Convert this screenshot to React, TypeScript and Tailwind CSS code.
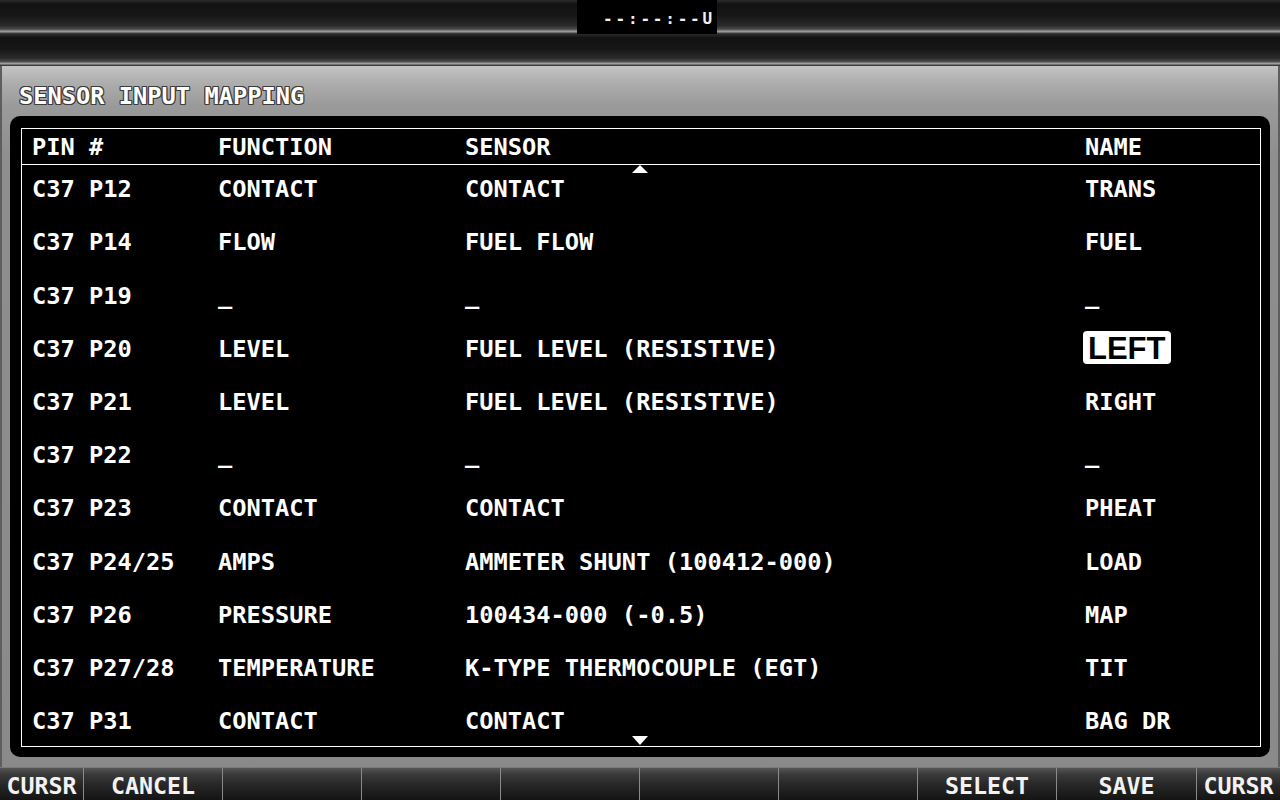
import React from "react";

const rows: [string, string, string, string][] = [
  ["C37 P12", "CONTACT", "CONTACT", "TRANS"],
  ["C37 P14", "FLOW", "FUEL FLOW", "FUEL"],
  ["C37 P19", "_", "_", "_"],
  ["C37 P20", "LEVEL", "FUEL LEVEL (RESISTIVE)", "LEFT"],
  ["C37 P21", "LEVEL", "FUEL LEVEL (RESISTIVE)", "RIGHT"],
  ["C37 P22", "_", "_", "_"],
  ["C37 P23", "CONTACT", "CONTACT", "PHEAT"],
  ["C37 P24/25", "AMPS", "AMMETER SHUNT (100412-000)", "LOAD"],
  ["C37 P26", "PRESSURE", "100434-000 (-0.5)", "MAP"],
  ["C37 P27/28", "TEMPERATURE", "K-TYPE THERMOCOUPLE (EGT)", "TIT"],
  ["C37 P31", "CONTACT", "CONTACT", "BAG DR"],
];

const keys: [string, string][] = [
  ["CURSR", "w-[83px]"],
  ["CANCEL", "w-[139px]"],
  ["", "w-[139px]"],
  ["", "w-[139px]"],
  ["", "w-[139px]"],
  ["", "w-[139px]"],
  ["", "w-[139px]"],
  ["SELECT", "w-[139px]"],
  ["SAVE", "w-[140px]"],
  ["CURSR", "w-[84px]"],
];

const barBg =
  "bg-[linear-gradient(to_bottom,#2c2c2c_0%,#121212_12%,#161616_45%,#2a2a2a_75%,#4a4a4a_86%,#a0a0a0_92%,#5a5a5a_97%,#1a1a1a_100%)]";

export default function App() {
  return (
    <div className="w-[1280px] h-[800px] bg-black flex flex-col overflow-hidden font-['DejaVu_Sans_Mono',monospace] font-bold text-white">
      {/* Top bar */}
      <div className="h-[34px] flex shrink-0">
        <div className={`w-[577px] ${barBg}`} />
        <div className="w-[140px] bg-black flex items-center justify-end pr-[2px] pt-[3px] text-[16px] tracking-[2.8px] leading-none text-[#f0f0f0]">
          --:--:--U
        </div>
        <div className={`flex-1 ${barBg}`} />
      </div>
      {/* Second bar */}
      <div className={`h-[32px] shrink-0 ${barBg}`} />

      {/* Gray panel */}
      <div className="h-[701px] shrink-0 flex flex-col border-x-[2px] border-[#5e5e5e] bg-[linear-gradient(to_bottom,#c4c4c4_0px,#acacac_18px,#9a9a9a_40px,#8e8e8e_90px,#8a8a8a_100%)]">
        <div className="h-[50px] flex items-center pl-[17px] pt-[11px]">
          <span className="text-[23.7px] leading-none [text-shadow:-1px_-1px_0_#3c3c3c,1px_-1px_0_#3c3c3c,-1px_1px_0_#3c3c3c,1px_1px_0_#3c3c3c,0_1px_0_#3c3c3c,0_-1px_0_#3c3c3c,1px_0_0_#3c3c3c,-1px_0_0_#3c3c3c]">
            SENSOR INPUT MAPPING
          </span>
        </div>
        <div className="h-[641px] mx-[8px] rounded-[10px] bg-black pt-[12px] pb-[10px] pl-[11px] pr-[9px] flex">
          <div className="relative flex-1 border border-white flex flex-col">
            {/* header */}
            <div className="h-[36px] shrink-0 border-b border-white grid grid-cols-[186px_247px_620px_1fr] pl-[10px] items-center text-[23.7px] leading-none pt-[2px]">
              <span>PIN #</span>
              <span>FUNCTION</span>
              <span>SENSOR</span>
              <span>NAME</span>
            </div>
            <div className="flex-1 min-h-0 flex flex-col">
              {rows.map((r, i) => (
                <div
                  key={i}
                  className="h-[53.2px] shrink-0 grid grid-cols-[186px_247px_620px_1fr] pl-[10px] items-center text-[23.7px] leading-none pb-[3px]"
                >
                  <span>{r[0]}</span>
                  <span>{r[1]}</span>
                  <span>{r[2]}</span>
                  <span>
                    {r[3] === "LEFT" ? (
                      <span className="inline-block -ml-[2px] -translate-y-[2px] bg-white text-black rounded-[4px] px-[5px] h-[33px] leading-[35px] font-['Liberation_Sans',Arial,sans-serif] font-bold text-[31px]">
                        LEFT
                      </span>
                    ) : (
                      r[3]
                    )}
                  </span>
                </div>
              ))}
            </div>
            {/* scroll indicators */}
            <svg
              className="absolute left-[610px] top-[36px]"
              width="16"
              height="8"
              viewBox="0 0 16 8"
            >
              <polygon points="8,0 16,8 0,8" fill="white" />
            </svg>
            <svg
              className="absolute left-[610px] bottom-[1px]"
              width="16"
              height="9"
              viewBox="0 0 16 9"
            >
              <polygon points="0,0 16,0 8,9" fill="white" />
            </svg>
          </div>
        </div>
      </div>

      {/* Soft keys */}
      <div className="h-[33px] shrink-0 flex border-t border-[#7a7a7a] bg-[linear-gradient(to_bottom,#565656_0%,#3a3a3a_20%,#262626_55%,#141414_100%)]">
        {keys.map(([label, w], i) => (
          <div
            key={i}
            className={`${w} h-full flex items-center justify-center pt-[3px] text-[23.3px] leading-none text-[#f2f2f2] ${
              i > 0 ? "border-l border-[#8a8a8a]" : ""
            }`}
          >
            {label}
          </div>
        ))}
      </div>
    </div>
  );
}
